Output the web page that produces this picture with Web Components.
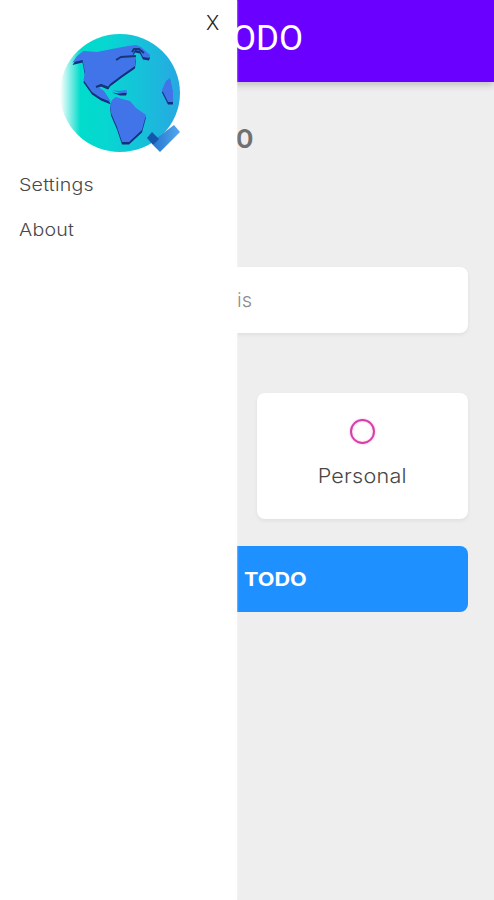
<!DOCTYPE html>
<html lang="en">
<head>
<meta charset="utf-8">
<title>TODO</title>
<style>
  body {
      margin: 0;
      height: 900px;
      overflow: hidden;
      background-color: #eeeeee;
      font-family: Inter, 'Open Sans', sans-serif;
      color: #484848;
  }
</style>
</head>
<body>
<todo-app>
  <side-drawer slot="drawer">
    <drawer-item>Settings</drawer-item>
    <drawer-item>About</drawer-item>
  </side-drawer>
  <app-header>ODO</app-header>
  <todo-form></todo-form>
</todo-app>

<script>
/**
 * Attach an open shadow root with the given markup.
 */
function render (element, html) {
  const template = document.createElement('template')
  template.innerHTML = html
  element.attachShadow({ mode: 'open' })
    .appendChild(template.content.cloneNode(true))
}

// The page itself, with the drawer lying over it.
customElements.define('todo-app',
  class extends HTMLElement {
    constructor () {
      super()
      render(this, `
        <style>
        :host {
            display: block;
            position: relative;
            height: 900px;
        }

        ::slotted(side-drawer) {
            position: absolute;
            top: 0;
            left: 0;
        }
        </style>
        <slot></slot>
        <slot name="drawer"></slot>
      `)
    }
  })

customElements.define('app-header',
  class extends HTMLElement {
    constructor () {
      super()
      render(this, `
        <style>
        :host {
            display: block;
            box-sizing: border-box;
            height: 82px;
            padding: 18px 0 0 232px;
            background-color: #6a00ff;
            box-shadow: 0 3px 7px rgba(0, 0, 0, 0.2);
            color: #ffffff;
            font: 400 35px/41px Roboto, sans-serif;
        }
        </style>
        <slot></slot>
      `)
    }
  })

customElements.define('side-drawer',
  class extends HTMLElement {
    constructor () {
      super()
      render(this, `
        <style>
        :host {
            display: flex;
            flex-direction: column;
            box-sizing: border-box;
            width: 237px;
            height: 900px;
            padding: 12px 17px 0 19px;
            background-color: #ffffff;
            box-shadow: 0 0 2px rgba(255, 255, 255, 0.8);
        }

        button {
            align-self: flex-end;
            width: 15px;
            height: 22px;
            padding: 0;
            border: 0;
            background: none;
            color: #222222;
            font: 300 20px/23px Inter, sans-serif;
        }

        globe-logo {
            margin-left: 41px;
        }

        nav {
            display: flex;
            flex-direction: column;
            gap: 21px;
            margin-top: 19px;
        }
        </style>
        <button type="button">X</button>
        <globe-logo></globe-logo>
        <nav><slot></slot></nav>
      `)
    }
  })

// The letters are drawn a little wider than the font has them.
customElements.define('drawer-item',
  class extends HTMLElement {
    constructor () {
      super()
      render(this, `
        <style>
        :host {
            display: block;
            font-size: 17.5px;
            font-weight: 300;
            line-height: 24px;
            letter-spacing: 0.2px;
        }

        span {
            display: inline-block;
            transform: scaleX(1.12);
            transform-origin: left;
        }
        </style>
        <span><slot></slot></span>
      `)
    }
  })

customElements.define('globe-logo',
  class extends HTMLElement {
    constructor () {
      super()
      render(this, `
        <style>
        :host, svg {
            display: block;
        }
        </style>
        <svg width="122" height="120" viewBox="60 34 122 120">
          <defs>
            <linearGradient id="sea">
              <stop offset="0" stop-color="#00dccb" stop-opacity="0"/>
              <stop offset="0.17" stop-color="#00dccb"/>
              <stop offset="0.42" stop-color="#08d5d2"/>
              <stop offset="1" stop-color="#27a8e2"/>
            </linearGradient>
            <linearGradient id="check">
              <stop offset="0" stop-color="#2477ce"/>
              <stop offset="1" stop-color="#55a8ee"/>
            </linearGradient>
            <g id="land">
              <path d="M72.5 62.5L77 56L83.5 51L97 52L112 49L128 46L136 45L141 47L150 55L149 58L143 57L140 51L135 50L133 54L136 57L135 66L122 75L110 84L108 87L101 84L97 86L104 91L108 97L111 102L101 98L92 92L83.5 80L85 73L82.5 60Z"/>
              <path d="M112 90L119 91L127 90L126 93L120 93Z"/>
              <path d="M112 100L116 97L122 99L130 101L136 108L146 115L142 130L129 142L122 142L117 127L111 113L110 105Z"/>
              <path d="M170 78L166 81L162 90L165 96L168 102L173 102L173 92Z"/>
            </g>
          </defs>
          <ellipse cx="120" cy="93" rx="60" ry="59" fill="url(#sea)"/>
          <use href="#land" fill="#12317c" transform="translate(0 2.5)"/>
          <use href="#land" fill="#4173e9"/>
          <path d="M116 60L121 57L136 56M132 52L134 49L139 49L144 53M96 87L101 85L109 88" fill="none" stroke="#173579" stroke-width="2"/>
          <path d="M157 138L174 125L180 132L160 152L153 145Z" fill="url(#check)"/>
          <path d="M152 132L159 139L153 145L147 138Z" fill="#1555ab"/>
        </svg>
      `)
    }
  })

customElements.define('todo-form',
  class extends HTMLElement {
    constructor () {
      super()
      render(this, `
        <style>
        :host {
            display: flex;
            flex-direction: column;
            padding: 42px 26px 0;
        }

        h2 {
            margin: 0 0 111px;
            padding-left: 210px;
            color: #707070;
            font: 700 25px/32px Roboto, sans-serif;
        }

        .field, .submit {
            box-sizing: border-box;
            height: 66px;
            border-radius: 8px;
            line-height: 66px;
        }

        .field {
            margin-bottom: 60px;
            padding-left: 211px;
            background-color: #ffffff;
            box-shadow: 0 2px 4px rgba(0, 0, 0, 0.06);
            color: #8c8c8c;
            font-size: 20px;
            font-weight: 300;
        }

        .options {
            display: grid;
            grid-template-columns: 211px;
            justify-content: end;
            margin-bottom: 27px;
        }

        .submit {
            padding-left: 218px;
            border: 0;
            background-color: #1e90ff;
            color: #ffffff;
            font-family: inherit;
            font-size: 19px;
            font-weight: 700;
            text-align: left;
        }

        .submit span {
            display: inline-block;
            transform: scaleX(1.14);
            transform-origin: left;
        }
        </style>
        <h2>O</h2>
        <div class="field">is</div>
        <div class="options">
          <todo-option>Personal</todo-option>
        </div>
        <button class="submit" type="button"><span>TODO</span></button>
      `)
    }
  })

customElements.define('todo-option',
  class extends HTMLElement {
    constructor () {
      super()
      render(this, `
        <style>
        :host {
            display: flex;
            flex-direction: column;
            align-items: center;
            box-sizing: border-box;
            height: 126px;
            padding-top: 26px;
            border-radius: 8px;
            background-color: #ffffff;
            box-shadow: 0 2px 4px rgba(0, 0, 0, 0.06);
            font-size: 20px;
            font-weight: 300;
            line-height: 26px;
            letter-spacing: 0.2px;
        }

        .circle {
            box-sizing: border-box;
            width: 25px;
            height: 25px;
            margin-bottom: 19px;
            border: 2px solid #d43fa8;
            border-radius: 50%;
            box-shadow: 0 0 2px rgba(255, 90, 205, 0.6), inset 0 0 2px rgba(255, 90, 205, 0.5);
        }

        .label {
            transform: scaleX(1.08);
        }
        </style>
        <span class="circle"></span>
        <span class="label"><slot></slot></span>
      `)
    }
  })
</script>
</body>
</html>
